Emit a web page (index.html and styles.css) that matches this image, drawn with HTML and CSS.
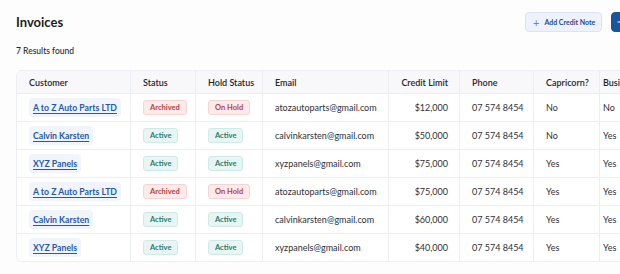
FILE: index.html
```html
<!DOCTYPE html>
<html lang="en">
<head>
  <meta charset="UTF-8">
  <title>Invoices</title>
  <link rel="stylesheet" href="styles.css">
</head>
<body>
  <div class="page">
    <!-- Cabecalho -->
    <div class="header">
      <h1>Invoices</h1>
      <div class="actions">
        <button class="btn btn-light"><span class="plus">+</span>Add Credit Note</button>
        <button class="btn btn-dark" aria-label="New Invoice">
          <svg width="8" height="8" viewBox="0 0 8 8"><path d="M4 0.5v7M0.5 4h7" stroke="#fff" stroke-width="1.2"/></svg>
        </button>
      </div>
    </div>
    <p class="results">7 Results found</p>

    <div class="table-wrap">
      <table>
        <thead>
          <tr>
            <th class="c-customer">Customer</th>
            <th class="c-status">Status</th>
            <th class="c-hold">Hold Status</th>
            <th class="c-email">Email</th>
            <th class="c-limit num">Credit Limit</th>
            <th class="c-phone">Phone</th>
            <th class="c-cap">Capricorn?</th>
            <th class="c-bus">Business</th>
          </tr>
        </thead>
        <tbody>
          <tr>
            <td><a class="cust">A to Z Auto Parts LTD</a></td>
            <td><span class="badge red">Archived</span></td>
            <td><span class="badge red">On Hold</span></td>
            <td>atozautoparts@gmail.com</td>
            <td class="num">$12,000</td>
            <td>07 574 8454</td>
            <td>No</td>
            <td class="c-bus">No</td>
          </tr>
          <tr>
            <td><a class="cust">Calvin Karsten</a></td>
            <td><span class="badge green">Active</span></td>
            <td><span class="badge green">Active</span></td>
            <td>calvinkarsten@gmail.com</td>
            <td class="num">$50,000</td>
            <td>07 574 8454</td>
            <td>No</td>
            <td class="c-bus">Yes</td>
          </tr>
          <tr>
            <td><a class="cust">XYZ Panels</a></td>
            <td><span class="badge green">Active</span></td>
            <td><span class="badge green">Active</span></td>
            <td>xyzpanels@gmail.com</td>
            <td class="num">$75,000</td>
            <td>07 574 8454</td>
            <td>Yes</td>
            <td class="c-bus">Yes</td>
          </tr>
          <tr>
            <td><a class="cust">A to Z Auto Parts LTD</a></td>
            <td><span class="badge red">Archived</span></td>
            <td><span class="badge red">On Hold</span></td>
            <td>atozautoparts@gmail.com</td>
            <td class="num">$75,000</td>
            <td>07 574 8454</td>
            <td>Yes</td>
            <td class="c-bus">Yes</td>
          </tr>
          <tr>
            <td><a class="cust">Calvin Karsten</a></td>
            <td><span class="badge green">Active</span></td>
            <td><span class="badge green">Active</span></td>
            <td>calvinkarsten@gmail.com</td>
            <td class="num">$60,000</td>
            <td>07 574 8454</td>
            <td>Yes</td>
            <td class="c-bus">Yes</td>
          </tr>
          <tr>
            <td><a class="cust">XYZ Panels</a></td>
            <td><span class="badge green">Active</span></td>
            <td><span class="badge green">Active</span></td>
            <td>xyzpanels@gmail.com</td>
            <td class="num">$40,000</td>
            <td>07 574 8454</td>
            <td>Yes</td>
            <td class="c-bus">Yes</td>
          </tr>
        </tbody>
      </table>
    </div>
  </div>
</body>
</html>
```

FILE: styles.css
```css
html, body {
  margin: 0;
  background: #fdfdfe;
  overflow: hidden;
}

body {
  font-family: 'Lato', sans-serif;
  color: #2b2b2f;
}

.page {
  box-sizing: border-box;
  width: 720px;
  padding: 12px 16px 0 16px;
}

.header {
  display: flex;
  align-items: center;
  height: 20px;
}

.header h1 {
  margin: 0;
  font-size: 13px;
  font-weight: 700;
  color: #1d1d22;
}

.actions {
  margin-left: auto;
  display: flex;
  gap: 9px;
}

.btn {
  flex-shrink: 0;
  box-sizing: border-box;
  height: 20px;
  border-radius: 4px;
  font-family: 'Lato', sans-serif;
  font-size: 7px;
  font-weight: 700;
  white-space: nowrap;
  padding: 0 0 0 7px;
  display: flex;
  align-items: center;
  gap: 5px;
}

.btn .plus {
  font-size: 11px;
  font-weight: 400;
  color: #6b86c0;
}

.btn-light {
  width: 77px;
  background: #eef2fd;
  border: 1px solid #dbe3f8;
  color: #234c93;
}

.btn-dark {
  width: 93px;
  background: #1456a2;
  border: 1px solid #1456a2;
  padding-left: 5px;
}

.results {
  margin: 0;
  padding-top: 14px;
  height: 24px;
  font-size: 8.5px;
  font-weight: 500;
  color: #2b2b2f;
}

.table-wrap {
  border: 1px solid #eceef3;
  border-radius: 6px;
  overflow: hidden;
  width: 700px;
  background: #fff;
}

table {
  border-collapse: collapse;
  table-layout: fixed;
  width: 700px;
  font-size: 9px;
}

th {
  background: #f8f8fb;
  height: 22px;
  text-align: left;
  font-weight: 600;
  color: #26262b;
  white-space: nowrap;
  padding: 0 12px;
  border-right: 1px solid #eceef3;
  border-bottom: 1px solid #eceef3;
}

td {
  height: 27px;
  padding: 0 12px;
  border-right: 1px solid #eceef3;
  border-bottom: 1px solid #eceef3;
  color: #2f2f34;
  white-space: nowrap;
}

tbody tr:last-child td {
  border-bottom: none;
}

.num {
  text-align: right;
  padding-right: 11px;
}

.c-customer { width: 89px; }
.c-status { width: 40px; }
.c-hold { width: 42px; }
.c-email { width: 101px; }
.c-limit { width: 47px; }
.c-phone { width: 49px; }
.c-cap { width: 41px; }

th.c-bus, td.c-bus {
  padding-left: 3px;
  border-right: none;
}

.cust {
  display: inline-block;
  padding: 4px 4px;
  border-radius: 4px;
  background: #f1f4fb;
  color: #2459ab;
  font-size: 8.7px;
  font-weight: 700;
  text-decoration: underline;
  text-underline-offset: 2px;
}

.badge {
  display: inline-block;
  height: 13px;
  line-height: 13px;
  padding: 0 6px;
  border-radius: 3px;
  font-size: 7.5px;
  font-weight: 700;
}

.badge.red {
  background: #fdeaea;
  border: 1px solid #f6d4d4;
  color: #b5443a;
}

.badge.green {
  background: #e7f6f4;
  border: 1px solid #cfeae5;
  color: #2b7c69;
}
```
